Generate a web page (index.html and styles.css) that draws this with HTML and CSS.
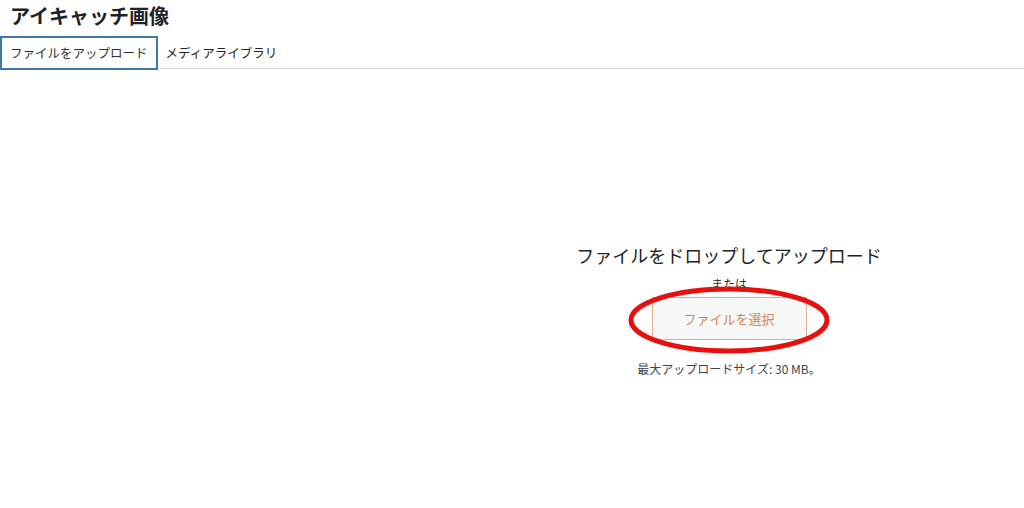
FILE: index.html
```html
<!DOCTYPE html>
<html lang="ja">

<head>
    <meta charset="UTF-8">
    <title>アイキャッチ画像</title>
    <link rel="stylesheet" href="styles.css">
</head>

<body>
    <div class="media-header">
        <h1 class="media-title">アイキャッチ画像</h1>
        <div class="media-tabs">
            <a href="javascript:void(0);" class="media-tab active">ファイルをアップロード</a>
            <a href="javascript:void(0);" class="media-tab">メディアライブラリ</a>
        </div>
    </div>
    <div class="upload-area">
        <div class="upload-side"></div>
        <div class="upload-inline">
            <h2 class="upload-instructions">ファイルをドロップしてアップロード</h2>
            <p class="upload-or">または</p>
            <div class="upload-button-wrap">
                <a href="javascript:void(0);" class="upload-button">ファイルを選択</a>
                <!--赤丸-->
                <svg class="upload-mark" width="204" height="70" viewBox="0 0 204 70">
                    <ellipse cx="102" cy="35" rx="98" ry="31" fill="none" stroke="#e8100f" stroke-width="5"/>
                </svg>
            </div>
            <p class="max-upload-size">最大アップロードサイズ: 30 MB。</p>
        </div>
    </div>
</body>

</html>
```

FILE: styles.css
```css
body {
    margin: 0px;
    background: #ffffff;
    color: #1d2327;
    font-family: "Noto Sans CJK JP", "Noto Sans", sans-serif;
}

h1,
h2,
p,
a {
    margin: 0px;
    padding: 0px;
}

a {
    text-decoration: none;
    color: #1d2327;
}

.media-title {
    font-size: 20px;
    line-height: 32px;
    font-weight: bold;
    padding: 0px 10px;
    height: 36px;
}

.media-tabs {
    display: flex;
    border-bottom: #dcdcde solid 1px;
    height: 32px;
}

.media-tab {
    font-size: 12.5px;
    line-height: 30px;
    padding: 0px 6px;
    border: transparent solid 2px;
    height: 30px;
}

.media-tab.active {
    border-color: #3f78a8;
    color: #2c3338;
    padding: 0px 8px 0px 8px;
}

.upload-area {
    display: flex;
}

.upload-side {
    width: 434px;
}

.upload-inline {
    flex: 1;
    display: flex;
    flex-direction: column;
    align-items: center;
    padding-top: 173px;
}

.upload-instructions {
    font-size: 18px;
    font-weight: normal;
    line-height: 26px;
    color: #1d2327;
}

.upload-or {
    font-size: 12px;
    line-height: 16px;
    margin-top: 8px;
    color: #2c3338;
}

.upload-button-wrap {
    position: relative;
    margin-top: 5px;
}

.upload-button {
    display: block;
    width: 153px;
    height: 41px;
    line-height: 41px;
    text-align: center;
    font-size: 13px;
    color: #d08556;
    background: #f6f7f7;
    border: #dcae8c solid 1px;
}

.upload-mark {
    position: absolute;
    left: -25px;
    top: -12px;
}

.max-upload-size {
    font-size: 12px;
    line-height: 16px;
    margin-top: 21px;
    color: #3c434a;
}
```
